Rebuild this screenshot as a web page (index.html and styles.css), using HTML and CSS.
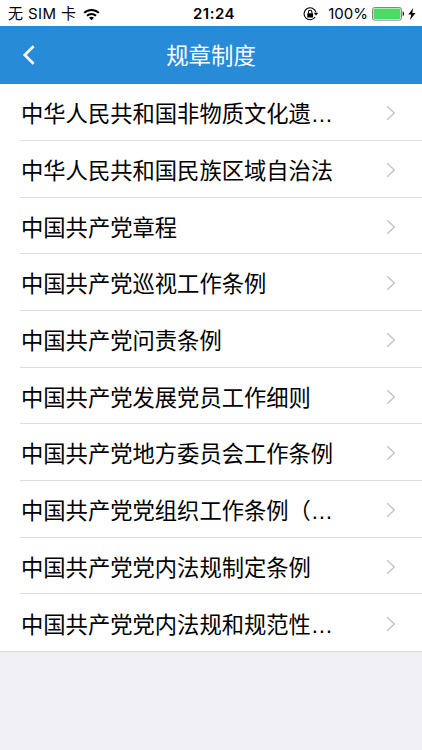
FILE: index.html
```
<!DOCTYPE html>
<html lang="zh-CN">
  <head>
    <meta charset="UTF-8">
    <meta name="viewport" content="width=device-width, initial-scale=1">
    <title>规章制度</title>
    <link rel="stylesheet" href="styles.css">
  </head>
  <body>
    <div class="status">
      <div class="status-left">
        <span class="carrier">无 SIM 卡</span>
        <svg class="wifi" width="17" height="13" viewBox="0 0 17 13">
          <g fill="none" stroke="#000" stroke-width="2">
            <path d="M1.2 4.9C5.2 .9 11.8 .9 15.8 4.9"/>
            <path d="M4 7.8C6.5 5.3 10.5 5.3 13 7.8"/>
          </g>
          <path d="M8.5 12.3L6 9.8C7.4 8.5 9.6 8.5 11 9.8Z"/>
        </svg>
      </div>
      <div class="time">21:24</div>
      <div class="status-right">
        <svg class="lock" width="16" height="14" viewBox="0 0 16 14">
          <path d="M12.9 5.2A6 6 0 1 0 12.2 10" fill="none" stroke="#000" stroke-width="1.1"/>
          <path d="M10.7 5.8h4.6l-2.3 2.8z"/>
          <rect x="4.3" y="6.2" width="5.8" height="4.2" rx=".5"/>
          <path d="M5.5 6.5V5a1.7 1.7 0 0 1 3.4 0v1.5" fill="none" stroke="#000" stroke-width="1.1"/>
        </svg>
        <span class="percent">100%</span>
        <svg class="battery" width="33" height="14" viewBox="0 0 33 14">
          <rect x=".5" y=".5" width="29" height="12.6" rx="2" fill="#fff" stroke="#777" stroke-width=".9"/>
          <rect x="1.5" y="1.5" width="27" height="10.6" rx="1" fill="#4cd964"/>
          <path d="M30.7 4.4c1.8.5 1.8 4.2 0 4.7z"/>
        </svg>
        <svg class="bolt" width="8" height="12" viewBox="0 0 8 12">
          <path d="M5.2 0L.3 6.5h3L2 12l5.5-7H4.3z"/>
        </svg>
      </div>
    </div>
    <div class="navbar">
      <a class="back" href="#">
        <svg width="14" height="20" viewBox="0 0 14 20">
          <path d="M11.6 1.3L2.8 10l8.8 8.7" fill="none" stroke="#fff" stroke-width="2.7"/>
        </svg>
      </a>
      <h1>规章制度</h1>
    </div>
    <svg class="symbols">
      <symbol id="chevron" viewBox="0 0 10 16">
        <path d="M1.2 1.2L8.3 8l-7.1 6.8" fill="none" stroke="#c3c3c8" stroke-width="1.4"/>
      </symbol>
    </svg>
    <ul class="list">
      <li><a class="row" href="#"><span>中华人民共和国非物质文化遗…</span><svg class="arrow"><use href="#chevron"/></svg></a></li>
      <li><a class="row" href="#"><span>中华人民共和国民族区域自治法</span><svg class="arrow"><use href="#chevron"/></svg></a></li>
      <li><a class="row" href="#"><span>中国共产党章程</span><svg class="arrow"><use href="#chevron"/></svg></a></li>
      <li><a class="row" href="#"><span>中国共产党巡视工作条例</span><svg class="arrow"><use href="#chevron"/></svg></a></li>
      <li><a class="row" href="#"><span>中国共产党问责条例</span><svg class="arrow"><use href="#chevron"/></svg></a></li>
      <li><a class="row" href="#"><span>中国共产党发展党员工作细则</span><svg class="arrow"><use href="#chevron"/></svg></a></li>
      <li><a class="row" href="#"><span>中国共产党地方委员会工作条例</span><svg class="arrow"><use href="#chevron"/></svg></a></li>
      <li><a class="row" href="#"><span>中国共产党党组织工作条例（…</span><svg class="arrow"><use href="#chevron"/></svg></a></li>
      <li><a class="row" href="#"><span>中国共产党党内法规制定条例</span><svg class="arrow"><use href="#chevron"/></svg></a></li>
      <li><a class="row" href="#"><span>中国共产党党内法规和规范性…</span><svg class="arrow"><use href="#chevron"/></svg></a></li>
    </ul>
  </body>
</html>
```

FILE: styles.css
```
* {
  box-sizing: border-box;
}
body {
  margin: 0;
  min-height: 750px;
  background-color: #efeff4;
  color: #000;
  font-family: "Liberation Sans", "Noto Sans CJK SC", sans-serif;
}
svg {
  display: block;
  flex: none;
}
.symbols {
  display: none;
}

/* status bar */
.status {
  display: grid;
  grid-template-columns: 1fr auto 1fr;
  align-items: center;
  height: 26px;
  padding: 2px 6px 0 8px;
  background-color: #fff;
  font-family: Inter, "Noto Sans CJK SC", sans-serif;
  font-size: 15px;
  line-height: 24px;
  white-space: nowrap;
}
.status-left,
.status-right {
  display: flex;
  align-items: center;
}
.status-right {
  justify-content: flex-end;
}
.carrier {
  letter-spacing: 0.4px;
}
.wifi {
  margin-left: 7px;
}
.time {
  padding-left: 4px;
  font-weight: 600;
  letter-spacing: 0.5px;
}
.percent {
  margin: 0 4px 0 9px;
}
.bolt {
  margin-left: 3px;
}

/* title bar */
.navbar {
  display: grid;
  grid-template-columns: 60px 1fr 60px;
  align-items: center;
  height: 58.3px;
  background-color: #288bd8;
  color: #fff;
}
.back {
  padding-left: 22px;
}
.navbar h1 {
  margin: 0;
  padding-top: 4px;
  font-size: 22.4px;
  font-weight: 400;
  line-height: 32px;
  text-align: center;
}

/* list */
.list {
  margin: 0;
  padding: 0 0 0 20px;
  border-bottom: 1px solid #dcdce0;
  background-color: #fff;
  list-style: none;
}
.row {
  display: flex;
  align-items: center;
  justify-content: space-between;
  height: 56.7px;
  padding: 2px 26px 0 1px;
  border-bottom: 1px solid #dedee0;
  color: #000;
  font-size: 22.3px;
  line-height: 32px;
  text-decoration: none;
  white-space: nowrap;
}
.row span {
  padding-top: 4px;
}
.list li:last-child .row {
  height: 56.2px;
  border-bottom: 0;
}
.arrow {
  width: 10px;
  height: 16px;
}
```
